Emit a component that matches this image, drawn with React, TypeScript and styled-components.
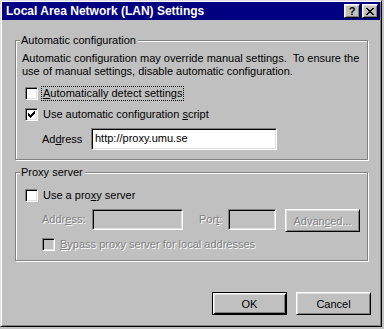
import React from "react"
import styled, { createGlobalStyle, css } from "styled-components"

const GlobalStyle = createGlobalStyle`
  html, body {
    margin: 0;
    padding: 0;
    background: #c0c0c0;
  }

  body {
    font-family: "Liberation Sans", Arial, sans-serif;
    font-size: 11px;
    color: #000;
  }

  u {
    text-decoration-thickness: 1px;
    text-underline-offset: 1px;
  }
`

const Window = styled.div`
  box-sizing: border-box;
  width: 382px;
  height: 327px;
  display: flex;
  flex-direction: column;
  background: #c0c0c0;
  border: 1px solid;
  border-color: #dfdfdf #000 #000 #dfdfdf;
  box-shadow: inset 1px 1px #fff, inset -1px -1px #808080;
  padding: 1px;
`

const TitleBar = styled.div`
  height: 18px;
  display: flex;
  align-items: center;
  padding: 0 2px 0 4px;
  background: #000080;
  color: #fff;
  font-weight: bold;
  font-size: 12px;
`

const Title = styled.div`
  flex: 1;
  white-space: nowrap;
`

const CaptionButton = styled.div<{ $gap?: number }>`
  box-sizing: border-box;
  width: 16px;
  height: 14px;
  margin-left: ${(p) => p.$gap ?? 0}px;
  display: flex;
  align-items: center;
  justify-content: center;
  background: #c0c0c0;
  color: #000;
  border: 1px solid;
  border-color: #fff #000 #000 #fff;
  box-shadow: inset 1px 1px #dfdfdf, inset -1px -1px #808080;
  font-weight: bold;
  font-size: 11px;
  line-height: 1;
`

const Body = styled.div`
  display: flex;
  flex-direction: column;
  padding-left: 13px;
`

const Group = styled.div<{ $top: number; $pt: number; $pb: number }>`
  position: relative;
  box-sizing: border-box;
  width: 353px;
  margin-top: ${(p) => p.$top}px;
  padding: ${(p) => p.$pt}px 6px ${(p) => p.$pb}px 6px;
  border: 1px solid #808080;
  box-shadow: 1px 1px 0 #fff, inset 1px 1px 0 #fff;
`

const GroupLabel = styled.span`
  position: absolute;
  top: -7px;
  left: 4px;
  padding: 0 2px 0 1px;
  line-height: 13px;
  background: #c0c0c0;
  white-space: nowrap;
`

const Text = styled.div`
  line-height: 13px;
  white-space: nowrap;
`

const CheckRow = styled.div<{ $top: number; $indent?: number }>`
  display: flex;
  align-items: center;
  height: 15px;
  margin-top: ${(p) => p.$top}px;
  padding-left: ${(p) => p.$indent ?? 3}px;
`

const Box = styled.div<{ $disabled?: boolean }>`
  box-sizing: border-box;
  width: 13px;
  height: 13px;
  flex: none;
  display: flex;
  align-items: center;
  justify-content: center;
  background: ${(p) => (p.$disabled ? "#c0c0c0" : "#fff")};
  border: 1px solid;
  border-color: #808080 #fff #fff #808080;
  box-shadow: inset 1px 1px #000, inset -1px -1px #dfdfdf;
`

const disabledText = css`
  color: #808080;
  text-shadow: 1px 1px 0 #fff;
`

const CheckLabel = styled.span<{ $focus?: boolean; $disabled?: boolean }>`
  margin-left: 3px;
  padding: 0 1px;
  line-height: 13px;
  border: 1px dotted ${(p) => (p.$focus ? "#000" : "transparent")};
  white-space: nowrap;
  ${(p) => p.$disabled && disabledText}
`

const FieldRow = styled.div<{ $top: number }>`
  display: flex;
  align-items: flex-start;
  margin-top: ${(p) => p.$top}px;
`

const FieldLabel = styled.span<{ $width: number; $left: number; $h: number; $disabled?: boolean }>`
  width: ${(p) => p.$width}px;
  margin-left: ${(p) => p.$left}px;
  line-height: ${(p) => p.$h}px;
  white-space: nowrap;
  ${(p) => p.$disabled && disabledText}
`

const Edit = styled.div<{ $width: number; $h: number; $disabled?: boolean }>`
  box-sizing: border-box;
  width: ${(p) => p.$width}px;
  height: ${(p) => p.$h}px;
  padding: 0 3px;
  line-height: ${(p) => p.$h - 4}px;
  background: ${(p) => (p.$disabled ? "#c0c0c0" : "#fff")};
  border: 1px solid;
  border-color: #808080 #fff #fff #808080;
  box-shadow: inset 1px 1px #000, inset -1px -1px #dfdfdf;
  white-space: nowrap;
`

const Button = styled.div<{ $default?: boolean; $disabled?: boolean; $left?: number }>`
  box-sizing: border-box;
  width: 75px;
  height: 23px;
  margin-left: ${(p) => p.$left ?? 0}px;
  display: flex;
  align-items: center;
  justify-content: center;
  background: #c0c0c0;
  border: 1px solid;
  border-color: #fff #000 #000 #fff;
  box-shadow: inset 1px 1px #dfdfdf, inset -1px -1px #808080;
  ${(p) =>
    p.$default &&
    css`
      border-color: #000;
      box-shadow: inset 1px 1px #fff, inset -1px -1px #000, inset 2px 2px #dfdfdf,
        inset -2px -2px #808080;
    `}
  ${(p) => p.$disabled && disabledText}
`

const Footer = styled.div`
  display: flex;
  justify-content: flex-end;
  margin-top: 31px;
  padding-right: 9px;
`

const CloseGlyph = () => (
  <svg width="8" height="7" viewBox="0 0 8 7" shapeRendering="crispEdges">
    <path
      d="M0 0h2v1h-2zM6 0h2v1h-2zM1 1h2v1h-2zM5 1h2v1h-2zM2 2h4v1h-4zM3 3h2v1h-2zM2 4h4v1h-4zM1 5h2v1h-2zM5 5h2v1h-2zM0 6h2v1h-2zM6 6h2v1h-2z"
      fill="#000"
    />
  </svg>
)

const CheckGlyph = () => (
  <svg width="7" height="7" viewBox="0 0 7 7" shapeRendering="crispEdges">
    <path
      d="M6 0h1v1h-1zM5 1h2v1h-2zM0 2h1v1h-1zM4 2h3v1h-3zM0 3h2v1h-2zM3 3h3v1h-3zM0 4h5v1h-5zM1 5h3v1h-3zM2 6h1v1h-1z"
      fill="#000"
    />
  </svg>
)

export default function App() {
  return (
    <>
      <GlobalStyle />
      <Window>
        <TitleBar>
          <Title>Local Area Network (LAN) Settings</Title>
          <CaptionButton>?</CaptionButton>
          <CaptionButton $gap={2}>
            <CloseGlyph />
          </CaptionButton>
        </TitleBar>
        <Body>
          <Group $top={20} $pt={11} $pb={9}>
            <GroupLabel>Automatic configuration</GroupLabel>
            <Text>Automatic configuration may override manual settings.&nbsp; To ensure the</Text>
            <Text>use of manual settings, disable automatic configuration.</Text>
            <CheckRow $top={8}>
              <Box />
              <CheckLabel $focus>
                <u>A</u>utomatically detect settings
              </CheckLabel>
            </CheckRow>
            <CheckRow $top={6}>
              <Box>
                <CheckGlyph />
              </Box>
              <CheckLabel>
                Use automatic configuration <u>s</u>cript
              </CheckLabel>
            </CheckRow>
            <FieldRow $top={6}>
              <FieldLabel $width={49} $left={20} $h={22}>
                Ad<u>d</u>ress
              </FieldLabel>
              <Edit $width={186} $h={22}>
                http://proxy.umu.se
              </Edit>
            </FieldRow>
          </Group>
          <Group $top={12} $pt={15} $pb={8}>
            <GroupLabel>Proxy server</GroupLabel>
            <CheckRow $top={0}>
              <Box />
              <CheckLabel>
                Use a pro<u>x</u>y server
              </CheckLabel>
            </CheckRow>
            <FieldRow $top={6}>
              <FieldLabel $width={50} $left={20} $h={21} $disabled>
                Addr<u>e</u>ss:
              </FieldLabel>
              <Edit $width={91} $h={21} $disabled />
              <FieldLabel $width={29} $left={16} $h={21} $disabled>
                Por<u>t</u>:
              </FieldLabel>
              <Edit $width={48} $h={21} $disabled />
              <Button $left={9} $disabled>
                Advan<u>c</u>ed...
              </Button>
            </FieldRow>
            <CheckRow $top={5} $indent={20}>
              <Box $disabled />
              <CheckLabel $disabled>
                <u>B</u>ypass proxy server for local addresses
              </CheckLabel>
            </CheckRow>
          </Group>
          <Footer>
            <Button $default>OK</Button>
            <Button $left={9}>Cancel</Button>
          </Footer>
        </Body>
      </Window>
    </>
  )
}
